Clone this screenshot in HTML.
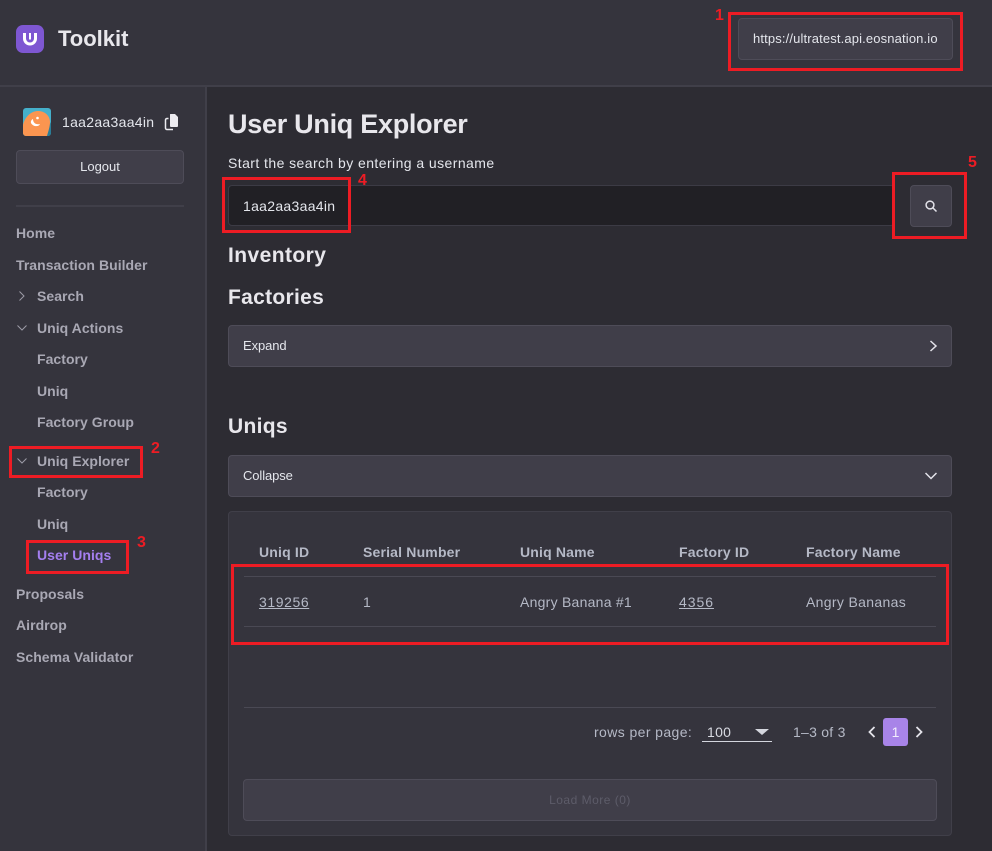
<!DOCTYPE html>
<html><head><meta charset="utf-8"><title>Toolkit</title>
<style>
html,body{margin:0;padding:0}
body{width:992px;height:851px;position:relative;overflow:hidden;background:#2d2c33;font-family:"Liberation Sans",sans-serif;color:#e8e7ec}
.a,.t{position:absolute;white-space:nowrap}
.t{line-height:20px}
.nav{font-size:14px;font-weight:bold;color:#a9a8b4;letter-spacing:.04px}
.btn{position:absolute;box-sizing:border-box;background:#403e49;border:1px solid #4e4c58;border-radius:4px}
.red{position:absolute;box-sizing:border-box;border:3px solid #ed1c24}
.num{position:absolute;color:#ed1c24;font-weight:bold;font-size:16px;line-height:18px}
.h{font-weight:bold;color:#e8e7ec;font-size:21px;letter-spacing:.3px}
.th{font-size:14px;font-weight:bold;color:#b5b9c6;letter-spacing:.18px}
.td{font-size:14px;color:#b5b9c6;letter-spacing:.25px}
.line{position:absolute;height:1px;background:#4a4954}
</style></head><body>
<div class="a" style="left:0;top:0;width:992px;height:85px;background:#35343d"></div>
<div class="a" style="left:0;top:85px;width:992px;height:2px;background:#403f49"></div>
<div class="a" style="left:0;top:87px;width:206px;height:764px;background:#35343d"></div>
<div class="a" style="left:205px;top:87px;width:2px;height:764px;background:#403f49"></div>

<svg class="a" style="left:16px;top:25px" width="28" height="28" viewBox="0 0 28 28"><rect width="28" height="28" rx="7" fill="#7e57d2"/><path d="M8.500 8v5.500a5.500 5.500 0 0 0 11 0V8" fill="none" stroke="#fff" stroke-width="3"/><rect x="13" y="8" width="2" height="6.500" fill="#fff"/></svg>
<div class="t" style="left:58px;top:29px;font-size:22px;font-weight:bold;color:#e8e7ec">Toolkit</div>

<div class="btn" style="left:738px;top:18px;width:215px;height:42px"></div>
<div class="t" style="left:753px;top:29px;font-size:13px;color:#e4e6ec;letter-spacing:.14px">https://ultratest.api.eosnation.io</div>
<div class="red" style="left:728px;top:12px;width:235px;height:59px"></div>
<div class="num" style="left:715px;top:7px">1</div>

<svg class="a" style="left:23px;top:108px" width="28" height="28" viewBox="0 0 28 28"><rect width="28" height="28" rx="3" fill="#45b0cb"/><path d="M20 28h5a3 3 0 0 0 3-3V14z" fill="#2a7d98"/><path d="M0 17C2 8 9 3 15 3c7 0 12 5 12 11 0 5-2 10-3 14H3a3 3 0 0 1-3-3z" fill="#fb9550"/><path d="M10 11c0 4 3 6 7 5-1 3-7 3-9-1-.5-1.500.5-3.500 2-4z" fill="#fff"/><circle cx="14.500" cy="10" r="1.300" fill="#fff"/></svg>
<div class="t" style="left:62px;top:112px;font-size:14px;color:#e4e6ec;letter-spacing:.3px">1aa2aa3aa4in</div>
<svg class="a" style="left:164px;top:113px" width="15" height="18" viewBox="0 0 15 18"><path d="M6 1.500A.5.5 0 0 1 6.500 1H11l3 3v9a1 1 0 0 1-1 1H7a1 1 0 0 1-1-1z" fill="#ecebf0"/><path d="M4.500 5.500H3A1.500 1.500 0 0 0 1.500 7v8A1.500 1.500 0 0 0 3 16.500h6" fill="none" stroke="#ecebf0" stroke-width="1.500"/></svg>

<div class="btn" style="left:16px;top:150px;width:168px;height:34px"></div>
<div class="t" style="left:16px;width:168px;text-align:center;top:157px;font-size:13px;color:#e4e6ec">Logout</div>
<div class="a" style="left:16px;top:205px;width:168px;height:2px;background:#403f49"></div>

<div class="t nav" style="left:16px;top:223px">Home</div>
<div class="t nav" style="left:16px;top:255px">Transaction Builder</div>
<svg class="a" style="left:16px;top:290px" width="12" height="12" viewBox="0 0 12 12"><path d="M3.500 1.500l4.500 4.500-4.500 4.500" fill="none" stroke="#9c9ba7" stroke-width="1"/></svg>
<div class="t nav" style="left:37px;top:286px">Search</div>
<svg class="a" style="left:16px;top:322px" width="12" height="12" viewBox="0 0 12 12"><path d="M1.500 3.500l4.500 4.500 4.500-4.500" fill="none" stroke="#9c9ba7" stroke-width="1"/></svg>
<div class="t nav" style="left:37px;top:318px">Uniq Actions</div>
<div class="t nav" style="left:37px;top:349px">Factory</div>
<div class="t nav" style="left:37px;top:381px">Uniq</div>
<div class="t nav" style="left:37px;top:412px">Factory Group</div>
<svg class="a" style="left:16px;top:455px" width="12" height="12" viewBox="0 0 12 12"><path d="M1.500 3.500l4.500 4.500 4.500-4.500" fill="none" stroke="#9c9ba7" stroke-width="1"/></svg>
<div class="t nav" style="left:37px;top:451px">Uniq Explorer</div>
<div class="t nav" style="left:37px;top:482px">Factory</div>
<div class="t nav" style="left:37px;top:514px">Uniq</div>
<div class="t nav" style="left:37px;top:545px;color:#a47ff0">User Uniqs</div>
<div class="t nav" style="left:16px;top:584px">Proposals</div>
<div class="t nav" style="left:16px;top:615px">Airdrop</div>
<div class="t nav" style="left:16px;top:647px">Schema Validator</div>
<div class="red" style="left:9px;top:446px;width:134px;height:32px"></div>
<div class="num" style="left:151px;top:440px">2</div>
<div class="red" style="left:26px;top:540px;width:103px;height:34px"></div>
<div class="num" style="left:137px;top:534px">3</div>

<div class="t" style="left:228px;top:109px;font-size:27px;line-height:30px;font-weight:bold;color:#e8e7ec;letter-spacing:-.28px">User Uniq Explorer</div>
<div class="t" style="left:228px;top:153px;font-size:14px;color:#e4e6ec;letter-spacing:.43px">Start the search by entering a username</div>
<div class="a" style="left:228px;top:185px;width:667px;height:41px;box-sizing:border-box;background:#212025;border:1px solid #3c3b45;border-radius:4px"></div>
<div class="t" style="left:243px;top:196px;font-size:14px;color:#e4e6ec;letter-spacing:.3px">1aa2aa3aa4in</div>
<div class="red" style="left:222px;top:177px;width:129px;height:56px"></div>
<div class="num" style="left:358px;top:172px">4</div>
<div class="btn" style="left:910px;top:185px;width:42px;height:42px"></div>
<svg class="a" style="left:924px;top:199px" width="14" height="14" viewBox="0 0 14 14"><circle cx="6" cy="6" r="3.900" fill="none" stroke="#e4e3ea" stroke-width="1.500"/><path d="M9 9l3.500 3.500" stroke="#e4e3ea" stroke-width="1.500"/></svg>
<div class="red" style="left:892px;top:172px;width:75px;height:67px"></div>
<div class="num" style="left:968px;top:154px">5</div>

<div class="t h" style="left:228px;top:246px;letter-spacing:.43px">Inventory</div>
<div class="t h" style="left:228px;top:288px">Factories</div>
<div class="btn" style="left:228px;top:325px;width:724px;height:42px"></div>
<div class="t" style="left:243px;top:336px;font-size:13px;color:#e4e6ec;letter-spacing:-.1px">Expand</div>
<svg class="a" style="left:927px;top:340px" width="12" height="12" viewBox="0 0 12 12"><path d="M3.500 1l5.500 5-5.500 5" fill="none" stroke="#e4e3ea" stroke-width="1.500"/></svg>
<div class="t h" style="left:228px;top:417px">Uniqs</div>
<div class="btn" style="left:228px;top:455px;width:724px;height:42px"></div>
<div class="t" style="left:243px;top:466px;font-size:13px;color:#e4e6ec;letter-spacing:-.1px">Collapse</div>
<svg class="a" style="left:925px;top:470px" width="12" height="12" viewBox="0 0 12 12"><path d="M.5 3l5.500 5.500 5.500-5.500" fill="none" stroke="#e4e3ea" stroke-width="1.500"/></svg>

<div class="a" style="left:228px;top:511px;width:724px;height:325px;box-sizing:border-box;background:#35343d;border:1px solid #403f49;border-radius:4px"></div>
<div class="t th" style="left:259px;top:542px">Uniq ID</div>
<div class="t th" style="left:363px;top:542px">Serial Number</div>
<div class="t th" style="left:520px;top:542px">Uniq Name</div>
<div class="t th" style="left:679px;top:542px">Factory ID</div>
<div class="t th" style="left:806px;top:542px">Factory Name</div>
<div class="line" style="left:244px;top:576px;width:692px"></div>
<div class="t td" style="left:259px;top:592px;text-decoration:underline;letter-spacing:.58px">319256</div>
<div class="t td" style="left:363px;top:592px">1</div>
<div class="t td" style="left:520px;top:592px">Angry Banana #1</div>
<div class="t td" style="left:679px;top:592px;text-decoration:underline;letter-spacing:.95px">4356</div>
<div class="t td" style="left:806px;top:592px;letter-spacing:.33px">Angry Bananas</div>
<div class="line" style="left:244px;top:626px;width:692px"></div>
<div class="red" style="left:231px;top:564px;width:718px;height:81px"></div>
<div class="line" style="left:244px;top:707px;width:692px"></div>

<div class="t td" style="left:594px;top:722px;letter-spacing:.4px">rows per page:</div>
<div class="t" style="left:707px;top:722px;font-size:14px;color:#d8dae2;letter-spacing:.3px">100</div>
<div class="a" style="left:755px;top:729px;width:0;height:0;border-left:7px solid transparent;border-right:7px solid transparent;border-top:6px solid #d4d6de"></div>
<div class="a" style="left:702px;top:741px;width:70px;height:1px;background:#d4d6de"></div>
<div class="t td" style="left:793px;top:722px">1–3 of 3</div>
<svg class="a" style="left:866px;top:726px" width="12" height="12" viewBox="0 0 12 12"><path d="M8.500 1l-5 5 5 5" fill="none" stroke="#e4e3ea" stroke-width="1.800"/></svg>
<div class="a" style="left:883px;top:718px;width:25px;height:28px;background:#a884e8;border-radius:3px;color:#f2eefc;font-size:14px;line-height:28px;text-align:center">1</div>
<svg class="a" style="left:913px;top:726px" width="12" height="12" viewBox="0 0 12 12"><path d="M3.500 1l5 5-5 5" fill="none" stroke="#e4e3ea" stroke-width="1.800"/></svg>

<div class="btn" style="left:243px;top:779px;width:694px;height:42px"></div>
<div class="t" style="left:243px;width:694px;text-align:center;top:790px;font-size:12px;color:#5d5c69;letter-spacing:.5px">Load More (0)</div>
</body></html>
